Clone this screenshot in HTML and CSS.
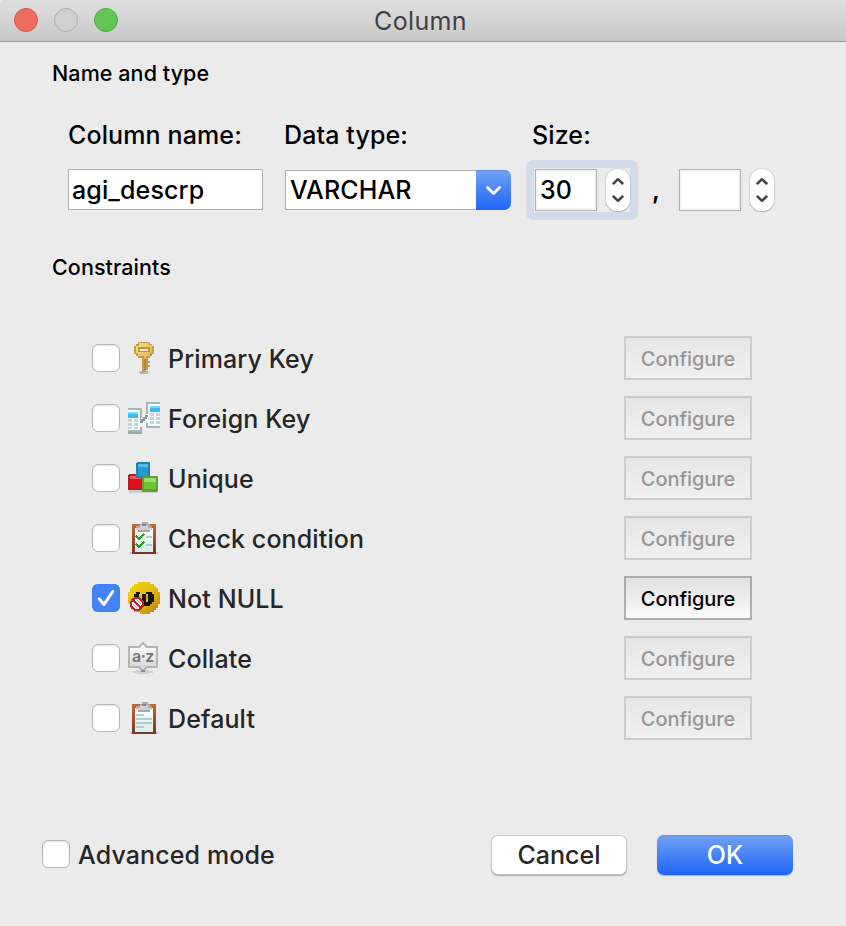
FILE: index.html
```html
<!DOCTYPE html>
<html lang="en">
<head>
<meta charset="utf-8">
<title>Column</title>
<link rel="stylesheet" href="styles.css">
</head>
<body>
<svg class="defs" aria-hidden="true">
  <defs>
    <linearGradient id="gold" x2="1" y2="1"><stop stop-color="#f8e08c"/><stop offset="1" stop-color="#d8a640"/></linearGradient>
    <linearGradient id="ball" x2="1" y2="1"><stop stop-color="#efd817"/><stop offset=".5" stop-color="#e8bd0d"/><stop offset="1" stop-color="#b87907"/></linearGradient>
    <linearGradient id="wood" x2="0" y2="1"><stop stop-color="#c36b2a"/><stop offset="1" stop-color="#793426"/></linearGradient>
    <linearGradient id="sheet" x2="0" y2="1"><stop stop-color="#fff"/><stop offset="1" stop-color="#d7eaeb"/></linearGradient>
    <linearGradient id="plate" x2="0" y2="1"><stop stop-color="#fff"/><stop offset="1" stop-color="#d2d2d2"/></linearGradient>
    <symbol id="stepper" viewBox="0 0 24 42"><path d="M7.5 14.5 12 10.2l4.500 4.300M7.500 27.500l4.500 4.300 4.500-4.300" fill="none" stroke="#444" stroke-width="2.500" stroke-linecap="round" stroke-linejoin="round"/></symbol>
    <symbol id="clipboard" viewBox="0 0 32 32">
      <path d="M2 30h28v2H2z" fill="#c5c5c5"/><path d="M4 2h24v30H4z" fill="url(#wood)"/><path d="M7 6h18v24H7z" fill="url(#sheet)"/>
      <path d="M12 2h2V0h6v2h2v2h2v4h-2v2H10V8H8V4h4z" fill="#aaa"/><path d="M12 3h8v3h4v2H8V6h4z" fill="#d0d0d4"/><path d="M14 2h4v2h-4z" fill="#85858b"/>
    </symbol>
  </defs>
</svg>
<header class="titlebar">
  <div class="lights"><i class="light close"></i><i class="light idle"></i><i class="light zoom"></i></div>
  <h1>Column</h1>
</header>
<main>
  <h2 class="heading">Name and type</h2>
  <section class="fields">
    <div class="field name"><label>Column name:</label><div class="input">agi_descrp</div></div>
    <div class="field type"><label>Data type:</label>
      <div class="combo"><div class="combo-value">VARCHAR</div><div class="combo-button"><svg width="35" height="40" viewBox="0 0 35 40"><path d="m11.500 17.500 6 6 6-6" fill="none" stroke="#fff" stroke-width="2.800" stroke-linecap="round" stroke-linejoin="round"/></svg></div></div>
    </div>
    <div class="field size"><label>Size:</label>
      <div class="sizes">
        <div class="spin focused"><div class="number">30</div><svg class="stepper"><use href="#stepper"/></svg></div>
        <span class="comma">,</span>
        <div class="spin"><div class="number"></div><svg class="stepper"><use href="#stepper"/></svg></div>
      </div>
    </div>
  </section>
  <h2 class="heading second">Constraints</h2>
  <section class="constraints">
    <div class="row"><i class="check"></i>
      <svg class="icon" viewBox="0 0 32 32"><ellipse cx="16" cy="30.500" rx="5" ry="1.500" fill="#b5b5b5"/><path d="M10 0h12v2h2v2h2v8h-2v2h-2v2h-2v3h2v2h-2v2h2v2h-2v3h-2v2h-4V16h-4v-2H8v-2H6V4h2V2h2z" fill="#c9984a"/><path d="M11 1h10v2h3v8h-2v3h-4v14h-2V14h-6v-3H8V4h3z" fill="url(#gold)"/><path d="M10 5h12v5H10z" fill="#b79a35"/><path d="M12 7h8v2h-8z" fill="#eee9c8"/><path d="M16 17h2v11h-2z" fill="#b58635"/></svg>
      <span class="label">Primary Key</span><button class="configure" disabled>Configure</button></div>
    <div class="row"><i class="check"></i>
      <svg class="icon" viewBox="0 0 32 32"><path d="M0 28h14v4H0z" fill="#98abae"/><path d="M0 6h14v24H0zM18 0h14v26H18z" fill="#a3b6b9"/><path d="M0 8h12v20H0zM20 2h12v22H20z" fill="#f5fbfb"/><path d="M0 10h10v6H0zM22 4h10v6H22z" fill="#39b9ee"/><path d="M0 10h10v2H0zM22 4h10v2H22z" fill="#73d8fa"/><path d="M0 17h4v3H0zm6 0h4v3H6zM0 21h4v3H0zm6 0h4v3H6zM0 25h4v2H0zm6 0h4v2H6zM22 11h4v3h-4zm6 0h4v3h-4zM22 15h4v3h-4zm6 0h4v3h-4zM22 19h4v3h-4zm6 0h4v3h-4z" fill="#c3d6d8"/><path d="M12 22h3v-4h2v-4h3" fill="none" stroke="#f8fafa" stroke-width="5"/><path d="M12 20h2v-2h2v-2h2v-2h2" fill="none" stroke="#82999d" stroke-width="1.700"/></svg>
      <span class="label">Foreign Key</span><button class="configure" disabled>Configure</button></div>
    <div class="row"><i class="check"></i>
      <svg class="icon" viewBox="0 0 32 32"><path d="M1 28h29v3H1z" fill="#ccc"/><rect y="12" width="15" height="16" rx="2" fill="#b91c27"/><path d="M2 14h12v11H2z" fill="#e30e20"/><path d="M2 14h11v3H2z" fill="#ee5960"/><rect x="8" width="14" height="16" rx="2" fill="#2480b4"/><path d="M10 2h10v12H10z" fill="#259bd4"/><path d="M10 2h10v3H10z" fill="#58b9e2"/><rect x="14" y="14" width="16" height="16" rx="2" fill="#59a433"/><path d="M16 16h12v11H16z" fill="#70c536"/><path d="M16 16h12v4H16z" fill="#9bda6c"/></svg>
      <span class="label">Unique</span><button class="configure" disabled>Configure</button></div>
    <div class="row"><i class="check"></i>
      <svg class="icon" viewBox="0 0 32 32"><use href="#clipboard"/><path d="m8 14 3 3 5-5M8 22l3 3 5-5" fill="none" stroke="#21a625" stroke-width="2.200"/><path d="M18 14h6v2h-6zM18 22h6v2h-6z" fill="#b3cccd"/></svg>
      <span class="label">Check condition</span><button class="configure" disabled>Configure</button></div>
    <div class="row"><i class="check checked"><svg viewBox="0 0 28 28"><path d="m7.300 15 4.700 5.500L20.700 7.500" fill="none" stroke="#fff" stroke-width="3" stroke-linecap="round" stroke-linejoin="round"/></svg></i>
      <svg class="icon" viewBox="0 0 32 32"><path d="M10 0h12v2h4v2h2v2h2v4h2v12h-2v4h-2v2h-2v2h-4v2H12v-2H6v-2H4v-2H2v-4H0V10h2V6h2V4h2V2h4z" fill="url(#ball)"/><path d="M8 10h4v2h-1v5H6v-5h2zM14 12h4v8h2v-8h-2v-2h6v2h2v8h-2v2h-2v2h-6v-2h-2z" fill="#171401"/><path d="M18 12h2v8h-2z" fill="#e0b510"/><circle cx="9" cy="22" r="6" fill="#fff" stroke="#b4292d" stroke-width="2.400"/><path d="m5 18 8 8" stroke="#b4292d" stroke-width="2.800"/><path d="m9 18 4 4M5 22l4 4" stroke="#d99" stroke-width="1"/></svg>
      <span class="label">Not NULL</span><button class="configure">Configure</button></div>
    <div class="row"><i class="check"></i>
      <svg class="icon" viewBox="0 0 32 32"><ellipse cx="15" cy="30" rx="10" ry="2" fill="#d2d2d2"/><path d="M1 5h10l4-4 4 4h10v20H19l-4 4-4-4H1z" fill="url(#plate)" stroke="#b5b5b5" stroke-width="1.700"/><path d="M13 28h4v2h-4z" fill="#888"/><text x="4" y="20" class="az">a·z</text></svg>
      <span class="label">Collate</span><button class="configure" disabled>Configure</button></div>
    <div class="row"><i class="check"></i>
      <svg class="icon" viewBox="0 0 32 32"><use href="#clipboard"/><path d="M8 12h8v2H8zm0 4h16v2H8zm0 4h16v2H8zm0 4h8v2H8z" fill="#b2cdcd"/></svg>
      <span class="label">Default</span><button class="configure" disabled>Configure</button></div>
  </section>
  <footer><i class="check"></i><span class="label advanced">Advanced mode</span><button class="action cancel">Cancel</button><button class="action ok">OK</button></footer>
</main>
</body>
</html>
```
FILE: styles.css
```css
* { box-sizing: border-box; }
body { margin: 0; height: 926px; background: #ebebeb; color: #000; font: 450 25px/40px Inter, sans-serif; letter-spacing: .12px; overflow: hidden; }
.defs { position: absolute; width: 0; height: 0; }
h1, h2 { margin: 0; }
.titlebar { height: 42px; display: grid; grid-template-columns: 1fr auto 1fr; align-items: start; background: linear-gradient(#dfdfdf, #c9c9c9); border-bottom: 1px solid #9d9d9d; border-top-left-radius: 4px; }
.titlebar h1 { font-size: 25px; font-weight: 400; line-height: 42px; color: #404040; letter-spacing: .35px; margin-right: 5px; }
.lights { display: flex; gap: 16px; padding: 8px 0 0 14px; }
.light { width: 24px; height: 24px; border-radius: 50%; border: 1px solid; }
.close { background: #ed6b5f; border-color: #d65549; }
.idle { background: #d0d0d0; border-color: #b1b1b1; }
.zoom { background: #62c655; border-color: #4eab3e; }
.heading { font-size: 21.5px; font-weight: 500; line-height: 32px; margin: 15px 0 0 52px; letter-spacing: .08px; }
.fields { display: flex; height: 145px; padding: 26px 0 0 68px; }
label { display: block; height: 40px; white-space: nowrap; }
.name { width: 216px; }
.type { width: 242px; }
.input { width: 195px; height: 41px; margin: 14px 0 0; padding: 0 0 0 3px; background: #fff; border: 1px solid #b0b0b0; }
.combo { display: flex; width: 227px; height: 41px; margin: 15px 0 0 1px; }
.combo-value { width: 191px; height: 40px; line-height: 38px; padding-left: 4px; background: #fff; border: 1px solid #b0b0b0; border-right: 0; }
.combo-button { width: 35px; height: 40px; border-radius: 0 7px 7px 0; background: linear-gradient(#72a2f5, #1d65f5); border: 0; box-shadow: inset 0 1px #6594e2; }
.combo-button svg { display: block; }
.size label { padding-left: 6px; }
.sizes { display: flex; height: 60px; margin-top: 5px; align-items: center; }
.spin { display: flex; gap: 9px; height: 44px; padding: 1px 0 0 1px; }
.focused { width: 112px; height: 60px; padding: 1px 0 0 1px; border: 8px solid #d3dbeb; border-radius: 7px; }
.number { flex: none; width: 62px; height: 42px; border: 1px solid #b0b0b0; background: #fff; box-shadow: inset 0 0 0 2px #f5f5f5; padding-left: 4px; line-height: 40px; }
.stepper { width: 24px; height: 42px; flex: none; border-radius: 11px; background: #fff; box-shadow: 0 0 1.500px #999, 0 1px 1px #bbb; }
.comma { width: 40px; padding-left: 14px; font-weight: 600; }
.second { margin-top: 17px; }
.constraints { padding: 45px 94px 0 92px; }
.row { display: flex; align-items: center; height: 60px; }
.check { flex: none; width: 28px; height: 28px; border: 1.500px solid #b7b7b7; border-radius: 6px; background: #fff; box-shadow: inset 0 1px 2px #e2e2e2; }
.checked { border: 0; background: #4383f5; box-shadow: inset 0 0 1px #1764db; }
.checked svg { display: block; }
.icon { width: 32px; height: 32px; margin: 0 8px; flex: none; overflow: visible; shape-rendering: crispEdges; }
.az { font: 600 16px Inter, sans-serif; fill: #777; letter-spacing: -.5px; }
.label { color: #262626; white-space: nowrap; padding-top: 1px; }
button { font-family: inherit; padding: 0; }
.configure { margin-left: auto; width: 128px; height: 44px; border: 2px solid #adadad; background: linear-gradient(#e1e1e1, #fafafa); font-size: 20px; font-weight: 500; color: #000; letter-spacing: -.08px; padding-top: 2px; }
.configure:disabled { border-color: #ccc; background: linear-gradient(#e6e6e6, #f0f0f0); color: #969696; }
footer { display: flex; align-items: center; height: 40px; margin-top: 87px; padding-left: 42px; }
footer .check { margin-top: -2px; }
.advanced { width: 413px; margin-left: 8px; padding-top: 0; }
.action { width: 136px; height: 40px; border-radius: 7px; border: 1px solid #c9c9c9; font-size: 25px; font-weight: 450; color: #262626; background: #fff; box-shadow: 0 1px 1px #aaa; }
.ok { margin-left: 30px; color: #fff; border: 0; background: linear-gradient(#72a2f5, #1d65f5); box-shadow: 0 1px 1px #9cb5df, inset 0 1px #6594e2; }
```
